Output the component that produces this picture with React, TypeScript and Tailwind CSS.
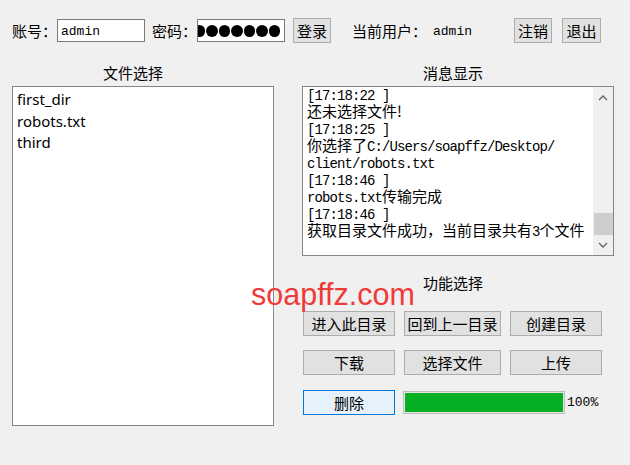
import React from 'react'

const cjk = "font-['Noto_Sans_CJK_SC',sans-serif]"
const mono = "font-['Liberation_Mono','Noto_Sans_CJK_SC',monospace]"

// ascii segment in the message box, narrower than the CJK around it
const M = ({ children }: { children: React.ReactNode }) => (
  <span className={`${mono} text-[14px] tracking-[-0.9px]`}>{children}</span>
)

const Btn = ({ w, children, primary }: { w: string; children: React.ReactNode; primary?: boolean }) => (
  <div
    className={`${w} h-[25px] flex items-center justify-center text-[15px] leading-none border ${
      primary ? 'border-[#0078d7] bg-[#e5f1fb]' : 'border-[#adadad] bg-[#e1e1e1]'
    }`}
  >
    {children}
  </div>
)

const Chevron = ({ up }: { up?: boolean }) => (
  <svg width="10" height="6" viewBox="0 0 10 6">
    <path d={up ? 'M1 5 L5 1 L9 5' : 'M1 1 L5 5 L9 1'} fill="none" stroke="#606060" strokeWidth="1.3" />
  </svg>
)

const messages: React.ReactNode[] = [
  <M>[17:18:22 ]</M>,
  <>还未选择文件!</>,
  <M>[17:18:25 ]</M>,
  <>你选择了<M>C:/Users/soapffz/Desktop/</M></>,
  <M>client/robots.txt</M>,
  <M>[17:18:46 ]</M>,
  <><M>robots.txt</M>传输完成</>,
  <M>[17:18:46 ]</M>,
  <>获取目录文件成功，当前目录共有<M>3</M>个文件</>,
]

export default function App() {
  return (
    <div className={`relative w-[630px] h-[465px] bg-[#f0f0f0] text-black ${cjk} overflow-hidden`}>
      {/* login bar */}
      <div className="flex items-center h-[25px] mt-[18px] pl-[12px] text-[15px]">
        <span className="w-[45px] leading-none">账号：</span>
        <div className={`w-[88px] h-[23px] border border-[#7a7a7a] bg-white flex items-center pl-[3px] pt-[2px] ${mono} text-[13px]`}>
          admin
        </div>
        <span className="ml-[7px] w-[45px] leading-none">密码：</span>
        <div className="w-[88px] h-[23px] border border-[#7a7a7a] bg-white flex items-center justify-end pr-[4px] overflow-hidden">
          <div className="flex gap-[1px] shrink-0">
            {[0, 1, 2, 3, 4, 5, 6].map(i => (
              <div key={i} className="w-[11.5px] h-[12px] rounded-full bg-black" />
            ))}
          </div>
        </div>
        <div className="ml-[8px]">
          <Btn w="w-[38px]">登录</Btn>
        </div>
        <span className="ml-[21px] w-[75px] leading-none">当前用户：</span>
        <span className={`ml-[6px] pt-[2px] ${mono} text-[13px]`}>admin</span>
        <div className="ml-[42px]">
          <Btn w="w-[38px]">注销</Btn>
        </div>
        <div className="ml-[10px]">
          <Btn w="w-[39px]">退出</Btn>
        </div>
      </div>

      <div className="flex mt-[20px] pl-[12px]">
        {/* file list */}
        <div className="w-[262px] flex flex-col">
          <div className="h-[20px] leading-[20px] text-[15px] pl-[91px]">文件选择</div>
          <div className="mt-[3px] h-[340px] border border-[#828790] bg-white pt-[2px] pl-[4px] font-['Noto_Sans',sans-serif] text-[15px] leading-[21.5px]">
            <div>first_dir</div>
            <div>robots.txt</div>
            <div>third</div>
          </div>
        </div>

        {/* right side */}
        <div className="ml-[28px] w-[312px] flex flex-col">
          <div className="h-[20px] leading-[20px] text-[15px] pl-[121px]">消息显示</div>
          <div className="mt-[3px] h-[170px] border border-[#828790] bg-white flex overflow-hidden">
            <div className="flex-1 pl-[4px] -mt-[2px] text-[15px] leading-[17px] whitespace-nowrap">
              {messages.map((m, i) => (
                <div key={i} className="h-[17px]">{m}</div>
              ))}
            </div>
            <div className="w-[20px] bg-[#f0f0f0] flex flex-col items-center">
              <div className="h-[20px] flex items-center justify-center mt-[1px]">
                <Chevron up />
              </div>
              <div className="flex-1" />
              <div className="w-[19px] h-[22px] bg-[#cdcdcd]" />
              <div className="h-[20px] flex items-center justify-center">
                <Chevron />
              </div>
            </div>
          </div>

          <div className="mt-[17px] h-[20px] leading-[20px] text-[15px] pl-[121px]">功能选择</div>

          <div className="pl-[1px] mt-[18px] flex gap-[9px]">
            <Btn w="w-[92px]">进入此目录</Btn>
            <Btn w="w-[97px]">回到上一目录</Btn>
            <Btn w="w-[92px]">创建目录</Btn>
          </div>
          <div className="pl-[1px] mt-[14px] flex gap-[9px]">
            <Btn w="w-[92px]">下载</Btn>
            <Btn w="w-[97px]">选择文件</Btn>
            <Btn w="w-[92px]">上传</Btn>
          </div>
          <div className="pl-[1px] mt-[15px] flex items-center">
            <Btn w="w-[92px]" primary>删除</Btn>
            <div className="ml-[8px] w-[162px] h-[23px] border border-[#bcbcbc] bg-[#e6e6e6] p-[1px]">
              <div className="h-full w-full bg-[#06b025]" />
            </div>
            <span className={`ml-[2px] ${mono} text-[13px]`}>100%</span>
          </div>
        </div>
      </div>

      {/* watermark */}
      <div className="absolute left-[251px] top-[279px] font-['Liberation_Sans',sans-serif] text-[30.5px] leading-none text-[#f03a3a]">
        soapffz.com
      </div>
    </div>
  )
}
